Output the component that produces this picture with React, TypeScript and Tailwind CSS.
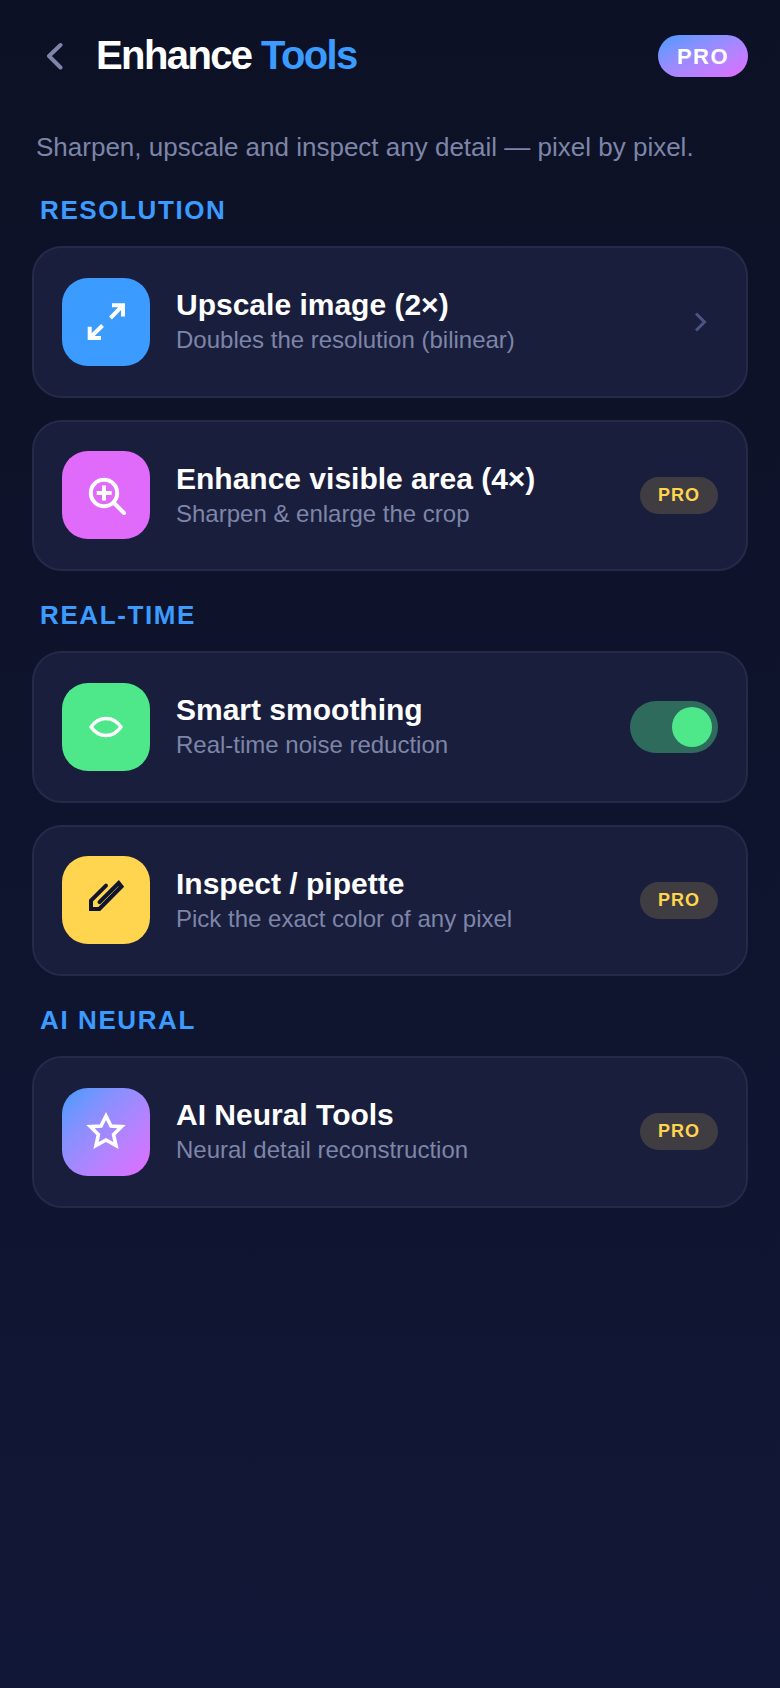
import { ReactNode } from "react";

function ProBadge() {
  return (
    <span className="flex h-[37px] w-[78px] items-center justify-center rounded-full bg-[#3f3d42] text-[18px] font-bold tracking-[1px] text-[#ffd54f]">
      PRO
    </span>
  );
}

function Toggle() {
  return (
    <div className="flex h-[52px] w-[88px] items-center justify-end rounded-full bg-[#2f6b5c] pr-[6px]">
      <div className="h-10 w-10 rounded-full bg-[#4ee88a]" />
    </div>
  );
}

function Chevron() {
  return (
    <svg width="24" height="24" viewBox="0 0 24 24" fill="none" className="mr-[6px]">
      <path d="M8 3.5 L16.5 12 L8 20.5" stroke="#4b5482" strokeWidth="3" />
    </svg>
  );
}

function Icon({ children }: { children: ReactNode }) {
  return (
    <svg width="44" height="44" viewBox="0 0 44 44" fill="none">
      {children}
    </svg>
  );
}

const expandIcon = (
  <Icon>
    <path d="M28 5.2 H39 V16.5 M39 5.2 L26.5 18" stroke="#fff" strokeWidth="4" />
    <path d="M17 38 H5.7 V26.7 M5.7 38 L18.5 25.5" stroke="#fff" strokeWidth="4" />
  </Icon>
);

const zoomIcon = (
  <Icon>
    <circle cx="20" cy="20" r="13.2" stroke="#fff" strokeWidth="4" />
    <path d="M12.7 20 H27.7 M20 12.5 V27.5" stroke="#fff" strokeWidth="4" />
    <path d="M30 30 L40 40" stroke="#fff" strokeWidth="4" strokeLinecap="round" />
  </Icon>
);

const smoothIcon = (
  <Icon>
    <path
      d="M7 22 C15 10.7 29 10.7 37 22 C29 33.3 15 33.3 7 22 Z"
      stroke="#fff"
      strokeWidth="3.5"
      strokeLinejoin="round"
    />
  </Icon>
);

const pipetteIcon = (
  <Icon>
    <path
      d="M22 7.7 L7 22.5 V31 H15.3 L37.5 8.5 L34.7 5 L15.5 24.2"
      stroke="#10152f"
      strokeWidth="4"
      strokeLinecap="round"
    />
  </Icon>
);

const starIcon = (
  <Icon>
    <path
      d="M22 6 L27 16 L37.6 16.6 L29.6 24.6 L32 35.5 L22 30 L12 35.5 L14.4 24.6 L6.4 16.6 L17 16 Z"
      stroke="#fff"
      strokeWidth="3.6"
    />
  </Icon>
);

function Card({
  icon,
  iconClass,
  title,
  sub,
  right,
}: {
  icon: ReactNode;
  iconClass: string;
  title: string;
  sub: string;
  right: ReactNode;
}) {
  return (
    <div className="flex h-[151.5px] items-center rounded-[30px] border-2 border-[#252a48] bg-[#191e3c] pr-[28px] pl-[28px]">
      <div className={`flex h-[88px] w-[88px] shrink-0 items-center justify-center rounded-[26px] ${iconClass}`}>
        {icon}
      </div>
      <div className="ml-[26px] flex-1">
        <div className="text-[30px] leading-[36px] font-bold text-white">{title}</div>
        <div className="text-[24px] leading-[33px] text-[#7d85a8]">{sub}</div>
      </div>
      {right}
    </div>
  );
}

function Label({ children, first }: { children: ReactNode; first?: boolean }) {
  return (
    <div
      className={`mb-[21px] ml-2 text-[26px] leading-[30px] font-bold tracking-[1.6px] text-[#3b9bff] ${
        first ? "mt-0" : "mt-[29px]"
      }`}
    >
      {children}
    </div>
  );
}

export default function App() {
  return (
    <div className="min-h-[1688px] bg-gradient-to-b from-[#0c1125] to-[#111736] font-['Liberation_Sans',sans-serif]">
      <header className="flex h-[112px] items-center pr-[32px] pl-[42px]">
        <svg width="24" height="28" viewBox="0 0 24 28" fill="none" className="mr-[30px]">
          <path d="M18.5 3 L7 14 L18.5 25.5" stroke="#7d85a8" strokeWidth="4" strokeLinecap="round" strokeLinejoin="round" />
        </svg>
        <h1 className="mb-[2px] flex-1 text-[40px] leading-[50px] font-bold tracking-[-1.6px] text-white">
          Enhance <span className="text-[#3b9bff]">Tools</span>
        </h1>
        <span className="flex h-[42px] w-[90px] items-center justify-center rounded-full bg-gradient-to-br from-[#3b9bff] to-[#e06bff] text-[22px] font-bold tracking-[1.5px] text-white">
          PRO
        </span>
      </header>
      <main className="px-8">
        <p className="mt-[15px] mb-[28px] ml-1 text-[26px] leading-[40px] text-[#7d85a8]">
          Sharpen, upscale and inspect any detail — pixel by pixel.
        </p>
        <Label first>RESOLUTION</Label>
        <div className="flex flex-col gap-[22px]">
          <Card icon={expandIcon} iconClass="bg-[#3b9bff]" title="Upscale image (2×)" sub="Doubles the resolution (bilinear)" right={<Chevron />} />
          <Card icon={zoomIcon} iconClass="bg-[#e06bfa]" title="Enhance visible area (4×)" sub="Sharpen & enlarge the crop" right={<ProBadge />} />
        </div>
        <Label>REAL-TIME</Label>
        <div className="flex flex-col gap-[22px]">
          <Card icon={smoothIcon} iconClass="bg-[#4ee88a]" title="Smart smoothing" sub="Real-time noise reduction" right={<Toggle />} />
          <Card icon={pipetteIcon} iconClass="bg-[#ffd54f]" title="Inspect / pipette" sub="Pick the exact color of any pixel" right={<ProBadge />} />
        </div>
        <Label>AI NEURAL</Label>
        <Card
          icon={starIcon}
          iconClass="bg-gradient-to-br from-[#3b9bff] to-[#e06bff]"
          title="AI Neural Tools"
          sub="Neural detail reconstruction"
          right={<ProBadge />}
        />
      </main>
    </div>
  );
}
